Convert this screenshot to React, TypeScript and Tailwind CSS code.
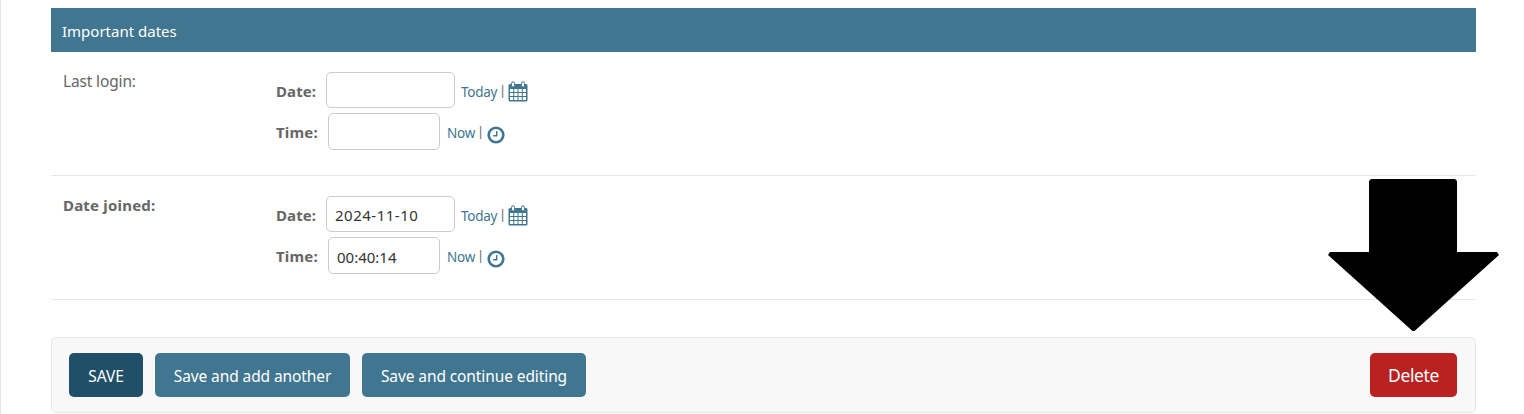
import React from 'react';

function CalendarIcon() {
  return (
    <svg width="20" height="21" viewBox="0 0 20 21" className="block shrink-0" fill="none">
      <path d="M2 3H18Q19.5 3 19.5 4.5V19Q19.5 20.5 18 20.5H2Q.5 20.5 .5 19V4.5Q.5 3 2 3Z" fill="#417690" />
      <path d="M2 8H5.2V10.9H2ZM6.2 8H9.5V10.9H6.2ZM10.5 8H13.8V10.9H10.5ZM14.8 8H18V10.9H14.8ZM2 11.9H5.2V15H2ZM6.2 11.9H9.5V15H6.2ZM10.5 11.9H13.8V15H10.5ZM14.8 11.9H18V15H14.8ZM2 16H5.2V19H2ZM6.2 16H9.5V19H6.2ZM10.5 16H13.8V19H10.5ZM14.8 16H18V19H14.8Z" fill="#fff" />
      <rect x="3.5" y=".8" width="3" height="5.2" rx="1.5" fill="#fff" stroke="#417690" />
      <rect x="13.5" y=".8" width="3" height="5.2" rx="1.5" fill="#fff" stroke="#417690" />
    </svg>
  );
}

function ClockIcon() {
  return (
    <svg width="18" height="18" viewBox="0 0 18 18" className="block shrink-0" fill="none">
      <circle cx="9" cy="9" r="7.3" stroke="#417690" strokeWidth="2.6" />
      <path d="M9.7 5V9.8H6.2" stroke="#417690" strokeWidth="1.4" />
    </svg>
  );
}

function DateTimeRow({ label, bold, date, time }: { label: string; bold?: boolean; date: string; time: string }) {
  return (
    <div className="flex h-[124px] border-b border-[#e8e8e8] pl-3 text-[#666]">
      <div className={`w-[212px] pt-[18px] leading-[22px] ${bold ? 'text-[15px] font-bold tracking-[0.2px]' : 'text-[15.5px] tracking-[-0.15px]'}`}>{label}</div>
      <div className="pt-5 text-[15px]">
        <div className="flex h-9 items-center">
          <span className="w-[51px] pt-[2px] pl-px font-bold tracking-[0.1px]">Date:</span>
          <input defaultValue={date} className="h-9 w-[129px] rounded-[5px] border border-[#ccc] bg-white px-2 pt-[2px] text-[15px] tracking-[0.5px] text-[#333] outline-none" />
          <a className="ml-[6px] w-[37px] pt-[4px] text-[13.5px] tracking-[-0.25px] whitespace-nowrap text-[#417690]">Today</a>
          <span className="w-[10px] pt-[2px] pl-px text-[13px]">|</span>
          <div className="pt-[2px]"><CalendarIcon /></div>
        </div>
        <div className="mt-[5px] flex h-[37px] items-center">
          <span className="w-[53px] pt-[1px] pl-px font-bold tracking-[0.2px]">Time:</span>
          <input defaultValue={time} className="h-[37px] w-[112px] rounded-[5px] border border-[#ccc] bg-white px-2 pt-[3px] text-[15px] text-[#333] outline-none" />
          <a className="ml-[7px] w-[30px] pt-[3px] text-[13.5px] tracking-[-0.25px] whitespace-nowrap text-[#417690]">Now</a>
          <span className="w-[10px] pt-[1px] text-[13px]">|</span>
          <div className="pt-[7px]"><ClockIcon /></div>
        </div>
      </div>
    </div>
  );
}

export default function App() {
  return (
    <main className="relative h-[414px] w-[1524px] overflow-hidden border-l border-[#e5e5e5] bg-white pt-2 pl-[50px] font-['Noto_Sans','Open_Sans',sans-serif]">
      <section className="w-[1425px]">
        <h2 className="flex h-11 items-center bg-[#417690] pt-[3px] pl-[11px] text-[15px] text-white">Important dates</h2>
        <DateTimeRow label="Last login:" date="" time="" />
        <DateTimeRow label="Date joined:" bold date="2024-11-10" time="00:40:14" />
        <div className="mt-[37px] flex h-[76px] items-center gap-3 rounded-[5px] border border-[#e8e8e8] bg-[#f8f8f8] pr-[18px] pl-[17px] text-[15.5px] tracking-[-0.1px] text-white">
          <button className="h-11 w-[74px] rounded-[5px] bg-[#205067] pt-[3px]">SAVE</button>
          <button className="h-11 w-[195px] rounded-[5px] bg-[#417690] pt-[3px]">Save and add another</button>
          <button className="h-11 w-[224px] rounded-[5px] bg-[#417690] pt-[3px]">Save and continue editing</button>
          <a className="ml-auto flex h-11 w-[87px] items-center justify-center rounded-[5px] bg-[#ba2121] pt-[1px] text-[17.5px] tracking-[-0.4px]">Delete</a>
        </div>
      </section>
      <svg className="absolute top-[178px] left-[1326px]" width="174" height="154" viewBox="0 0 174 154">
        <path d="M44 1H128L130 3V74H170L172 77L87.5 153H85.5L1 77L3 74H42V3Z" fill="#000" />
      </svg>
    </main>
  );
}
